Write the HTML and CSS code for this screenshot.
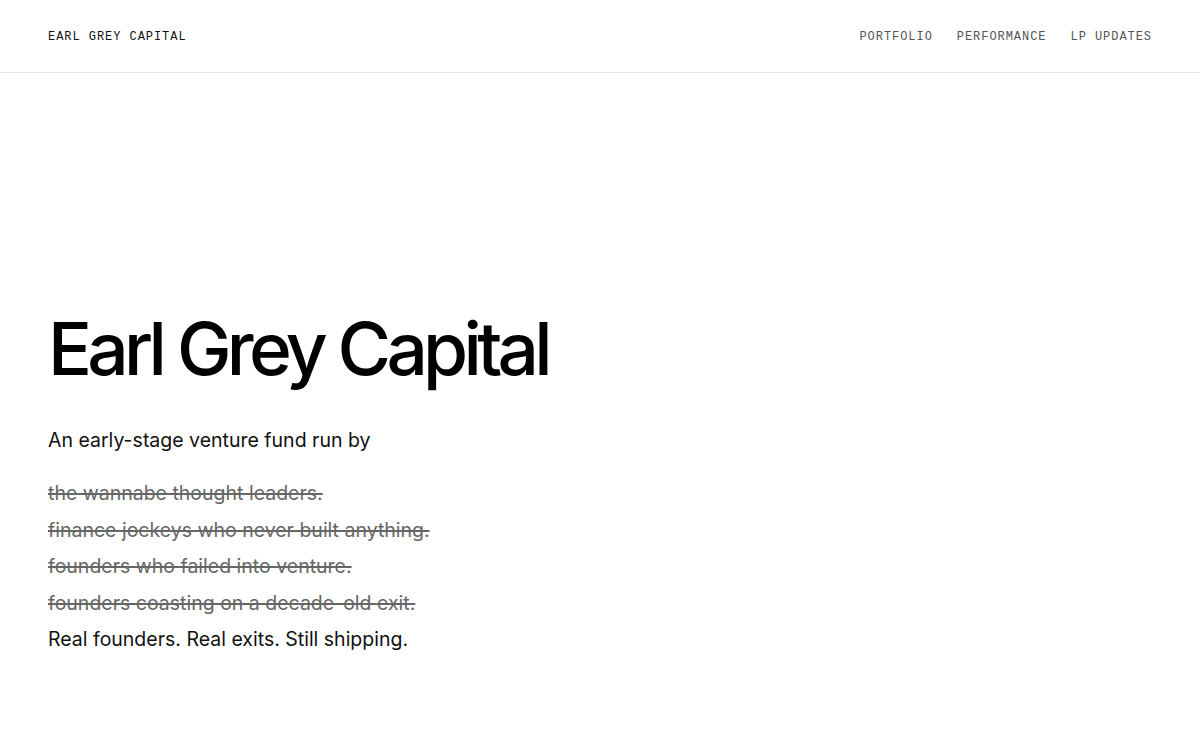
FILE: index.html
```html
<!DOCTYPE html>
<html lang="en">
<head>
<meta charset="utf-8">
<title>Earl Grey Capital</title>
<link rel="stylesheet" href="styles.css">
</head>
<body>
<header class="site-header">
  <div class="brand">EARL GREY CAPITAL</div>
  <nav class="nav">
    <a href="#">PORTFOLIO</a>
    <a href="#">PERFORMANCE</a>
    <a href="#">LP UPDATES</a>
  </nav>
</header>
<main class="hero">
  <h1 class="title">Earl Grey Capital</h1>
  <p class="lead">An early-stage venture fund run by</p>
  <ul class="list">
    <li class="struck">the wannabe thought leaders.</li>
    <li class="struck">finance jockeys who never built anything.</li>
    <li class="struck">founders who failed into venture.</li>
    <li class="struck">founders coasting on a decade-old exit.</li>
    <li class="real">Real founders. Real exits. Still shipping.</li>
  </ul>
</main>
</body>
</html>
```

FILE: styles.css
```css
* { box-sizing: border-box; }
html, body { margin: 0; padding: 0; background: #fff; }
body {
  font-family: Inter, "Noto Sans", sans-serif;
  color: #000;
  width: 1200px;
  height: 750px;
  overflow: hidden;
}
.site-header {
  height: 73px;
  border-bottom: 1px solid #e6e6e6;
  display: flex;
  align-items: center;
  justify-content: space-between;
  padding: 2px 48px 0;
}
.brand {
  font-family: "Liberation Mono", "DejaVu Sans Mono", monospace;
  font-size: 12px;
  letter-spacing: 0.95px;
  color: #111;
}
.nav {
  display: flex;
  gap: 24px;
}
.nav a {
  font-family: "Liberation Mono", "DejaVu Sans Mono", monospace;
  font-size: 12px;
  letter-spacing: 0.95px;
  color: #555555;
  text-decoration: none;
}
.hero {
  padding: 236px 48px 0;
}
.title {
  margin: 0;
  font-family: Inter, sans-serif;
  font-weight: 550;
  font-size: 73px;
  line-height: 80px;
  letter-spacing: -0.065em;
  color: #000;
}
.lead {
  margin: 37px 0 0;
  font-size: 19.5px;
  line-height: 28px;
  color: #111;
}
.list {
  list-style: none;
  margin: 21px 0 0;
  padding: 0;
}
.list li {
  font-size: 19.5px;
  line-height: 36.5px;
}
.struck {
  color: #666;
  text-decoration: line-through;
  text-decoration-thickness: 1.6px;
}
.real { color: #111; }
```
